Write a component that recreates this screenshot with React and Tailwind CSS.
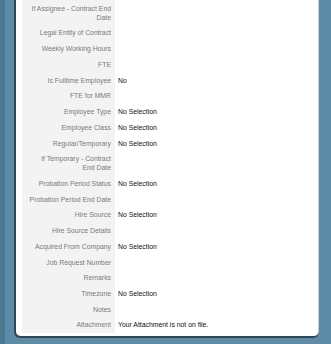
import React from "react";

const rows = [
  ["If Assignee - Contract End", "Date", ""],
  ["Legal Entity of Contract", null, ""],
  ["Weekly Working Hours", null, ""],
  ["FTE", null, ""],
  ["Is Fulltime Employee", null, "No"],
  ["FTE for MMR", null, ""],
  ["Employee Type", null, "No Selection"],
  ["Employee Class", null, "No Selection"],
  ["Regular/Temporary", null, "No Selection"],
  ["If Temporary - Contract", "End Date", ""],
  ["Probation Period Status", null, "No Selection"],
  ["Probation Period End Date", null, ""],
  ["Hire Source", null, "No Selection"],
  ["Hire Source Details", null, ""],
  ["Acquired From Company", null, "No Selection"],
  ["Job Request Number", null, ""],
  ["Remarks", null, ""],
  ["Timezone", null, "No Selection"],
  ["Notes", null, ""],
  ["Attachment", null, "Your Attachment is not on file."],
];

export default function App() {
  return (
    <div
      className="flex h-[344px] w-[331px] overflow-hidden bg-[#5b8aa6] bg-[repeating-conic-gradient(#5786a2_0_25%,#6090ab_0_50%)] bg-[length:2px_2px]"
      style={{ fontFamily: '"Liberation Sans", Arial, sans-serif' }}
    >
      <div className="w-[5px] shrink-0 bg-[#4a7893]" />
      <div className="w-[9px] shrink-0" />
      <div className="h-[338px] w-[305px] shrink-0 rounded-b-[6px] border-b-2 border-l-2 border-[#2c4758]">
        <div className="flex h-full flex-col rounded-b-[5px] border-r border-[#c9d0d4] bg-white pl-[6px]">
          <div className="grid grid-cols-[93px_1fr] pt-[0.4px] text-[6.85px] leading-[9px]">
            {rows.map(([a, b, v], i) => (
              <React.Fragment key={i}>
                <div className="bg-[#f3f3f3] py-[3.36px] pr-[4px] text-right text-[#7a7a7a]">
                  {a}
                  {b && <br />}
                  {b}
                </div>
                <div className="py-[3.36px] pl-[3px] text-[#111]">{v}</div>
              </React.Fragment>
            ))}
          </div>
        </div>
      </div>
    </div>
  );
}
